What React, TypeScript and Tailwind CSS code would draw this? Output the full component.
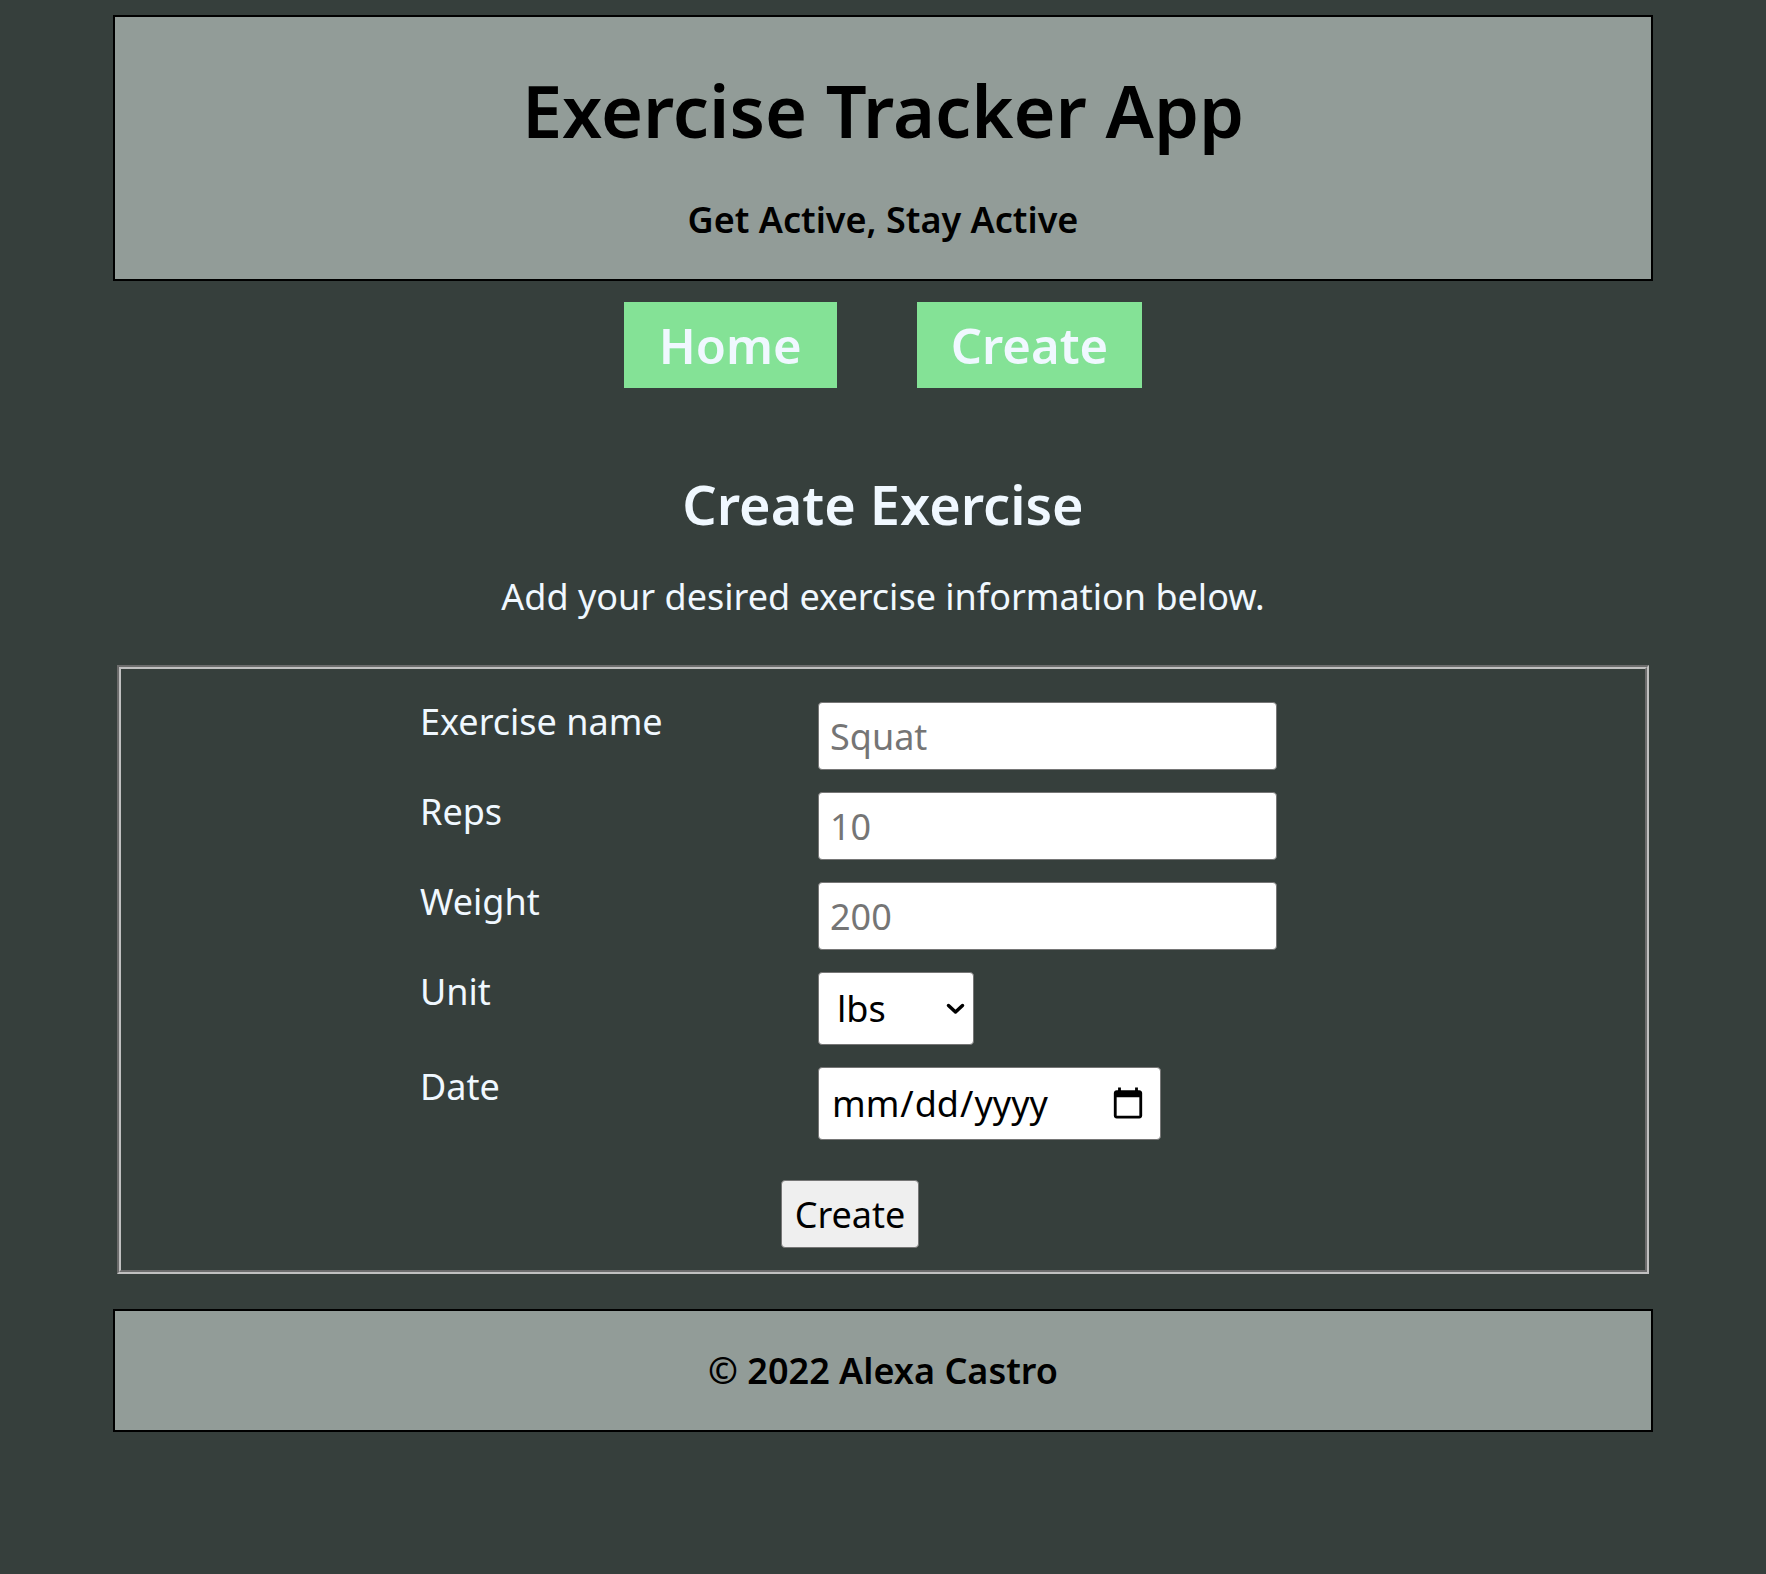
const fields = [
    { label: "Exercise name", placeholder: "Squat" },
    { label: "Reps", placeholder: "10" },
    { label: "Weight", placeholder: "200" },
];

export default function App() {
    return (
        <div className="min-h-screen bg-[#363f3c] pt-[15px] font-['Noto_Sans',sans-serif]">
            <header className="mx-auto w-[1540px] border-2 border-black bg-[#929c98] text-center text-black">
                <h1 className="mt-[44px] text-[72px] leading-[98px] font-semibold">
                    Exercise Tracker App
                </h1>
                <p className="mt-[36px] pb-[35px] text-[36px] leading-[49px] font-semibold">
                    Get Active, Stay Active
                </p>
            </header>

            <nav className="mt-[21px] flex justify-center gap-[80px]">
                <a className="bg-[#84e296] px-[35px] py-[8px] text-[49px] leading-[70px] font-semibold text-[#f0f8ff]">
                    Home
                </a>
                <a className="bg-[#84e296] px-[34px] py-[8px] text-[49px] leading-[70px] font-semibold text-[#f0f8ff]">
                    Create
                </a>
            </nav>

            <main className="text-center text-[#f0f8ff]">
                <h2 className="mt-[79px] text-[54px] leading-[74px] font-semibold">Create Exercise</h2>
                <p className="mt-[31px] text-[36px] leading-[49px]">
                    Add your desired exercise information below.
                </p>

                <fieldset className="mx-auto mt-[44px] w-[1532px] border-[4px] border-[#c0c0c0] [border-style:groove] pt-[28px] pb-[22px]">
                    <div className="ml-[299px] grid w-[860px] grid-cols-[398px_1fr] gap-y-[17px] text-left">
                        {fields.map((f) => (
                            <div key={f.label} className="contents">
                                <label className="text-[36px] leading-[49px]">{f.label}</label>
                                <input
                                    type="text"
                                    placeholder={f.placeholder}
                                    className="mt-[5px] h-[68px] w-[459px] rounded-[4px] border border-[#767676] bg-white px-[11px] text-[36px] text-black placeholder:text-[#757575]"
                                />
                            </div>
                        ))}

                        <label className="text-[36px] leading-[49px]">Unit</label>
                        <div className="relative mt-[5px] h-[73px] w-[156px]">
                            <select className="h-full w-full appearance-none rounded-[4px] border border-[#767676] bg-white pl-[18px] text-[36px] text-black">
                                <option>lbs</option>
                                <option>kgs</option>
                            </select>
                            <svg
                                className="pointer-events-none absolute top-[31px] right-[9px] h-[12px] w-[19px]"
                                viewBox="0 0 19 12"
                                fill="none"
                            >
                                <polyline
                                    points="2.5,2.5 9.5,9 16.5,2.5"
                                    stroke="black"
                                    strokeWidth="3.5"
                                    strokeLinecap="round"
                                    strokeLinejoin="round"
                                />
                            </svg>
                        </div>

                        <label className="text-[36px] leading-[49px]">Date</label>
                        <input
                            type="date"
                            className="mt-[5px] h-[73px] w-[343px] rounded-[4px] border border-[#767676] bg-white px-[12px] text-[36px] text-black"
                        />

                        <div className="col-span-2 mt-[23px] text-center">
                            <button className="h-[68px] rounded-[4px] border border-[#767676] bg-[#efefef] px-[13px] text-[36px] leading-[49px] text-black">
                                Create
                            </button>
                        </div>
                    </div>
                </fieldset>
            </main>

            <footer className="mx-auto mt-[35px] flex h-[123px] w-[1540px] items-center justify-center border-2 border-black bg-[#929c98]">
                <p className="text-[36px] leading-[49px] font-semibold text-black">© 2022 Alexa Castro</p>
            </footer>
        </div>
    );
}
